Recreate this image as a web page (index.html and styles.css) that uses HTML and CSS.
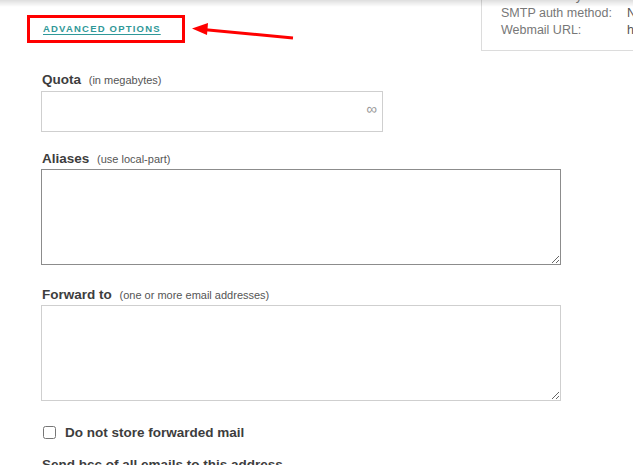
FILE: index.html
```html
<!DOCTYPE html>
<html lang="en">
<head>
    <meta charset="UTF-8">
    <meta name="viewport" content="width=device-width, initial-scale=1.0">
    <title>Mailbox - Advanced options</title>
    <link rel="stylesheet" href="styles.css">
</head>
<body>

    <div class="top-shade"></div>

    <div class="page">
        <div class="topbar">
            <div class="adv-box">
                <a href="#" class="adv-link">ADVANCED OPTIONS</a>
            </div>

            <div class="info-panel">
                <span class="info-label">SMTP security:</span><span class="info-value">STARTTLS</span>
                <span class="info-label">SMTP auth method:</span><span class="info-value">Normal password</span>
                <span class="info-label">Webmail URL:</span><span class="info-value">https://webmail</span>
            </div>
        </div>

        <svg class="arrow" width="120" height="30" viewBox="0 0 120 30">
            <line x1="112" y1="24" x2="22" y2="15.5" stroke="#f00" stroke-width="3"/>
            <polygon points="11,14.5 27,9 26,21" fill="#f00"/>
        </svg>

        <form class="form">
            <div class="form-group form-group-quota">
                <label class="field-label" for="quota">Quota <small>(in megabytes)</small></label>
                <div class="quota-wrap">
                    <input type="text" id="quota">
                    <span class="infinity">&infin;</span>
                </div>
            </div>

            <div class="form-group">
                <label class="field-label" for="aliases">Aliases <small>(use local-part)</small></label>
                <textarea id="aliases" class="active"></textarea>
            </div>

            <div class="form-group">
                <label class="field-label" for="forward">Forward to <small>(one or more email addresses)</small></label>
                <textarea id="forward"></textarea>
            </div>

            <div class="check-row">
                <input type="checkbox" id="nostore">
                <label for="nostore">Do not store forwarded mail</label>
            </div>

            <div class="form-group">
                <label class="field-label" for="bcc">Send bcc of all emails to this address</label>
            </div>
        </form>
    </div>

</body>
</html>
```

FILE: styles.css
```css
:root {
    --label-color: #3d3d3d;
    --muted-color: #555;
    --border-light: #cfcfcf;
    --border-dark: #8c8c8c;
    --teal: #2f9898;
    --annot-red: #f00;
}

html, body {
    overflow: hidden;
}

body {
    margin: 0;
    background-color: #fff;
    font-family: 'Liberation Sans', Arial, sans-serif;
    color: var(--label-color);
}

.top-shade {
    position: fixed;
    top: 0;
    left: 0;
    right: 0;
    height: 7px;
    background: linear-gradient(rgba(0, 0, 0, 0.13), rgba(0, 0, 0, 0));
    z-index: 5;
}

.page {
    position: relative;
    padding-left: 41px;
}

.topbar {
    display: flex;
    align-items: flex-start;
}

.adv-box {
    margin: 15px 0 0 -14px;
    width: 139px;
    height: 22px;
    border: 3px solid var(--annot-red);
    padding-left: 13px;
}

.adv-link {
    display: block;
    font-size: 9.5px;
    font-weight: bold;
    letter-spacing: 1.2px;
    line-height: 22px;
    color: var(--teal);
    text-decoration: underline;
    text-underline-offset: 2px;
}

.info-panel {
    margin: -13px -69px 0 auto;
    width: 200px;
    flex: 0 0 auto;
    border: 1px solid #dcdcdc;
    padding: 0 0 11px 19px;
    display: grid;
    grid-template-columns: 126px 1fr;
    font-size: 12.5px;
    line-height: 17px;
    white-space: nowrap;
    overflow: hidden;
}

.info-label {
    color: #777;
}

.info-value {
    color: #555;
}

.arrow {
    position: absolute;
    left: 181px;
    top: 14px;
}

.form {
    padding-top: 21px;
}

.form-group {
    margin-bottom: 22px;
}

.form-group-quota {
    margin-bottom: 19px;
}

.field-label {
    display: block;
    font-size: 13.5px;
    font-weight: bold;
    line-height: 16px;
    margin: 0 0 2px 1px;
}

.field-label small {
    font-size: 11px;
    font-weight: normal;
    color: var(--muted-color);
    margin-left: 4px;
}

.quota-wrap {
    position: relative;
    width: 342px;
    margin-top: 3px;
}

input[type="text"] {
    display: block;
    width: 100%;
    height: 41px;
    box-sizing: border-box;
    border: 1px solid var(--border-light);
    padding: 0 30px 0 10px;
    font-size: 13px;
    font-family: inherit;
}

.infinity {
    position: absolute;
    right: 6px;
    top: 9px;
    font-size: 15px;
    color: #999;
}

textarea {
    display: block;
    width: 520px;
    height: 96px;
    box-sizing: border-box;
    border: 1px solid var(--border-light);
    font-family: inherit;
    font-size: 13px;
    margin: 0;
}

textarea.active {
    border-color: var(--border-dark);
}

.check-row {
    display: flex;
    align-items: center;
    gap: 9px;
    margin: 0 0 17px 2px;
    height: 16px;
    padding-top: 1px;
}

.check-row input {
    margin: 0;
    width: 13px;
    height: 13px;
}

.check-row label {
    font-size: 13.5px;
    font-weight: bold;
}
```
